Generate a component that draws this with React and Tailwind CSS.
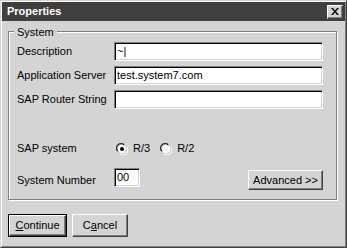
import React from 'react';

const font = { fontFamily: '"Liberation Sans", Arial, sans-serif' };

const sunken =
  'bg-white border border-t-[#808080] border-l-[#808080] border-r-white border-b-white shadow-[inset_1px_1px_0_#000,inset_-1px_-1px_0_#d4d4d4]';

const raised =
  'bg-[#d4d4d4] border border-t-white border-l-white border-r-[#404040] border-b-[#404040] shadow-[inset_-1px_-1px_0_#808080]';

const TextField = ({ value, className = '' }) => (
  <div className={`${sunken} h-[19px] flex items-center px-[2px] text-[11px] text-black ${className}`}>
    {value}
  </div>
);

const Radio = ({ checked, label }) => (
  <div className="flex items-center gap-[5px]">
    <svg width="12" height="12" viewBox="0 0 12 12">
      <path d="M1 8 A5 5 0 0 1 8 1" fill="none" stroke="#808080" strokeWidth="1" />
      <path d="M2 8.5 A4 4 0 0 1 8.5 2" fill="none" stroke="#000" strokeWidth="1" />
      <circle cx="6" cy="6" r="4" fill="#fff" />
      <path d="M11 4 A5 5 0 0 1 4 11" fill="none" stroke="#fff" strokeWidth="1" />
      {checked && <circle cx="6" cy="6" r="2" fill="#000" />}
    </svg>
    <span className="text-[11px]">{label}</span>
  </div>
);

const Row = ({ label, children, className = '' }) => (
  <div className={`flex items-center h-[19px] ${className}`}>
    <span className="w-[97px] text-[11px]">{label}</span>
    {children}
  </div>
);

export default function App() {
  return (
    <div
      className="w-[347px] h-[248px] border border-t-[#d4d4d4] border-l-[#d4d4d4] border-r-[#404040] border-b-[#404040] bg-[#d4d4d4] text-black"
      style={font}
    >
      <div className="h-full border border-t-white border-l-white border-r-[#808080] border-b-[#808080] flex flex-col">
        {/* Title bar */}
        <div className="h-[19px] bg-[#404040] flex items-center justify-between pl-[5px] pr-[2px]">
          <span className="text-white font-bold text-[11px]">Properties</span>
          <div className={`${raised} w-[16px] h-[14px] flex items-center justify-center`}>
            <svg width="8" height="7" viewBox="0 0 8 7">
              <path d="M0 0h2l2 2.5L6 0h2L5 3.5 8 7H6L4 4.5 2 7H0l3-3.5z" fill="#000" />
            </svg>
          </div>
        </div>

        <div className="px-[6px] pt-[10px]">
          {/* System group */}
          <div className="relative border border-[#808080] shadow-[inset_1px_1px_0_#fff,1px_1px_0_#fff] w-[329px] pl-[8px] pr-[13px] pt-[10px] pb-[9px]">
            <span className="absolute -top-[8px] left-[5px] px-[3px] bg-[#d4d4d4] text-[11px]">System</span>

            <Row label="Description">
              <TextField value="~|" className="w-[209px]" />
            </Row>
            <Row label="Application Server" className="mt-[5px]">
              <TextField value="test.system7.com" className="w-[209px]" />
            </Row>
            <Row label="SAP Router String" className="mt-[5px]">
              <TextField value="" className="w-[209px]" />
            </Row>

            <Row label="SAP system" className="mt-[30px]">
              <div className="flex items-center gap-[10px] pl-[2px]">
                <Radio checked label="R/3" />
                <Radio label="R/2" />
              </div>
            </Row>

            <div className="flex items-start h-[22px] mt-[10px]">
              <span className="w-[97px] text-[11px] mt-[4px]">System Number</span>
              <TextField value="00" className="w-[26px]" />
              <button className={`${raised} ml-auto mt-[2px] w-[75px] h-[20px] text-[11px] flex items-center justify-center`}>
                Advanced &gt;&gt;
              </button>
            </div>
          </div>

          {/* Bottom buttons */}
          <div className="flex gap-[5px] mt-[14px]">
            <div className="border border-black">
              <button className={`${raised} w-[57px] h-[21px] text-[11px] flex items-center justify-center`}>
                <span><span className="underline">C</span>ontinue</span>
              </button>
            </div>
            <button className={`${raised} w-[56px] h-[23px] text-[11px] flex items-center justify-center`}>
              <span>C<span className="underline">a</span>ncel</span>
            </button>
          </div>
        </div>
      </div>
    </div>
  );
}
